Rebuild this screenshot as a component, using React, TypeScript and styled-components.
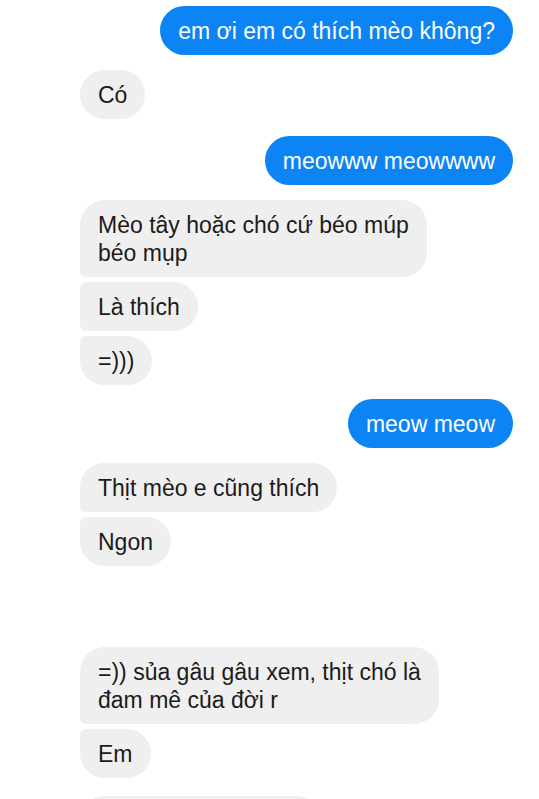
import React from "react";
import styled, { createGlobalStyle, css } from "styled-components";

const Global = createGlobalStyle`
  html, body { margin: 0; padding: 0; background: #ffffff; }
  body { font-family: "Liberation Sans", Arial, sans-serif; overflow: hidden; }
`;

const Thread = styled.div`
  display: flex;
  flex-direction: column;
  padding: 6px 26px 0 80px;
  height: 799px;
  box-sizing: border-box;
  overflow: hidden;
`;

const Group = styled.div<{ $mine?: boolean; $gap?: number }>`
  display: flex;
  flex-direction: column;
  align-items: ${(p) => (p.$mine ? "flex-end" : "flex-start")};
  gap: 5px;
  margin-bottom: ${(p) => p.$gap ?? 15}px;
  flex-shrink: 0;
`;

type Pos = "single" | "first" | "middle" | "last";

const Bubble = styled.div<{ $mine?: boolean; $pos: Pos; $w?: number }>`
  box-sizing: border-box;
  width: ${(p) => (p.$w ? `${p.$w}px` : "fit-content")};
  padding: 10.5px 18px;
  font-size: 23px;
  line-height: 28px;
  border-radius: 25px;
  white-space: nowrap;
  ${(p) =>
    p.$mine
      ? css`
          background: #0c84f4;
          color: #ffffff;
        `
      : css`
          background: #efefef;
          color: #1b1b1b;
        `}
  ${(p) =>
    !p.$mine && (p.$pos === "first" || p.$pos === "middle") &&
    css`
      border-bottom-left-radius: 6px;
    `}
  ${(p) =>
    !p.$mine && (p.$pos === "last" || p.$pos === "middle") &&
    css`
      border-top-left-radius: 6px;
    `}
`;

type G = { mine?: boolean; gap?: number; msgs: string[][] };

const groups: G[] = [
  { mine: true, msgs: [["em ơi em có thích mèo không?"]] },
  { msgs: [["Có"]], gap: 17 },
  { mine: true, msgs: [["meowww meowwww"]] },
  { msgs: [["Mèo tây hoặc chó cứ béo múp", "béo mụp"], ["Là thích"], ["=)))"]], gap: 14 },
  { mine: true, msgs: [["meow meow"]] },
  { msgs: [["Thịt mèo e cũng thích"], ["Ngon"]], gap: 81 },
  { msgs: [["=)) sủa gâu gâu xem, thịt chó là", "đam mê của đời r"], ["Em"]], gap: 18 },
];

const posOf = (i: number, n: number): Pos =>
  n === 1 ? "single" : i === 0 ? "first" : i === n - 1 ? "last" : "middle";

export default function App() {
  return (
    <>
      <Global />
      <Thread>
        {groups.map((g, gi) => (
          <Group key={gi} $mine={g.mine} $gap={g.gap}>
            {g.msgs.map((lines, i) => (
              <Bubble key={i} $mine={g.mine} $pos={posOf(i, g.msgs.length)}>
                {lines.map((l, li) => (
                  <React.Fragment key={li}>
                    {li > 0 && <br />}
                    {l}
                  </React.Fragment>
                ))}
              </Bubble>
            ))}
          </Group>
        ))}
        <Group>
          <Bubble $pos="first" $w={241}>&nbsp;</Bubble>
        </Group>
      </Thread>
    </>
  );
}
